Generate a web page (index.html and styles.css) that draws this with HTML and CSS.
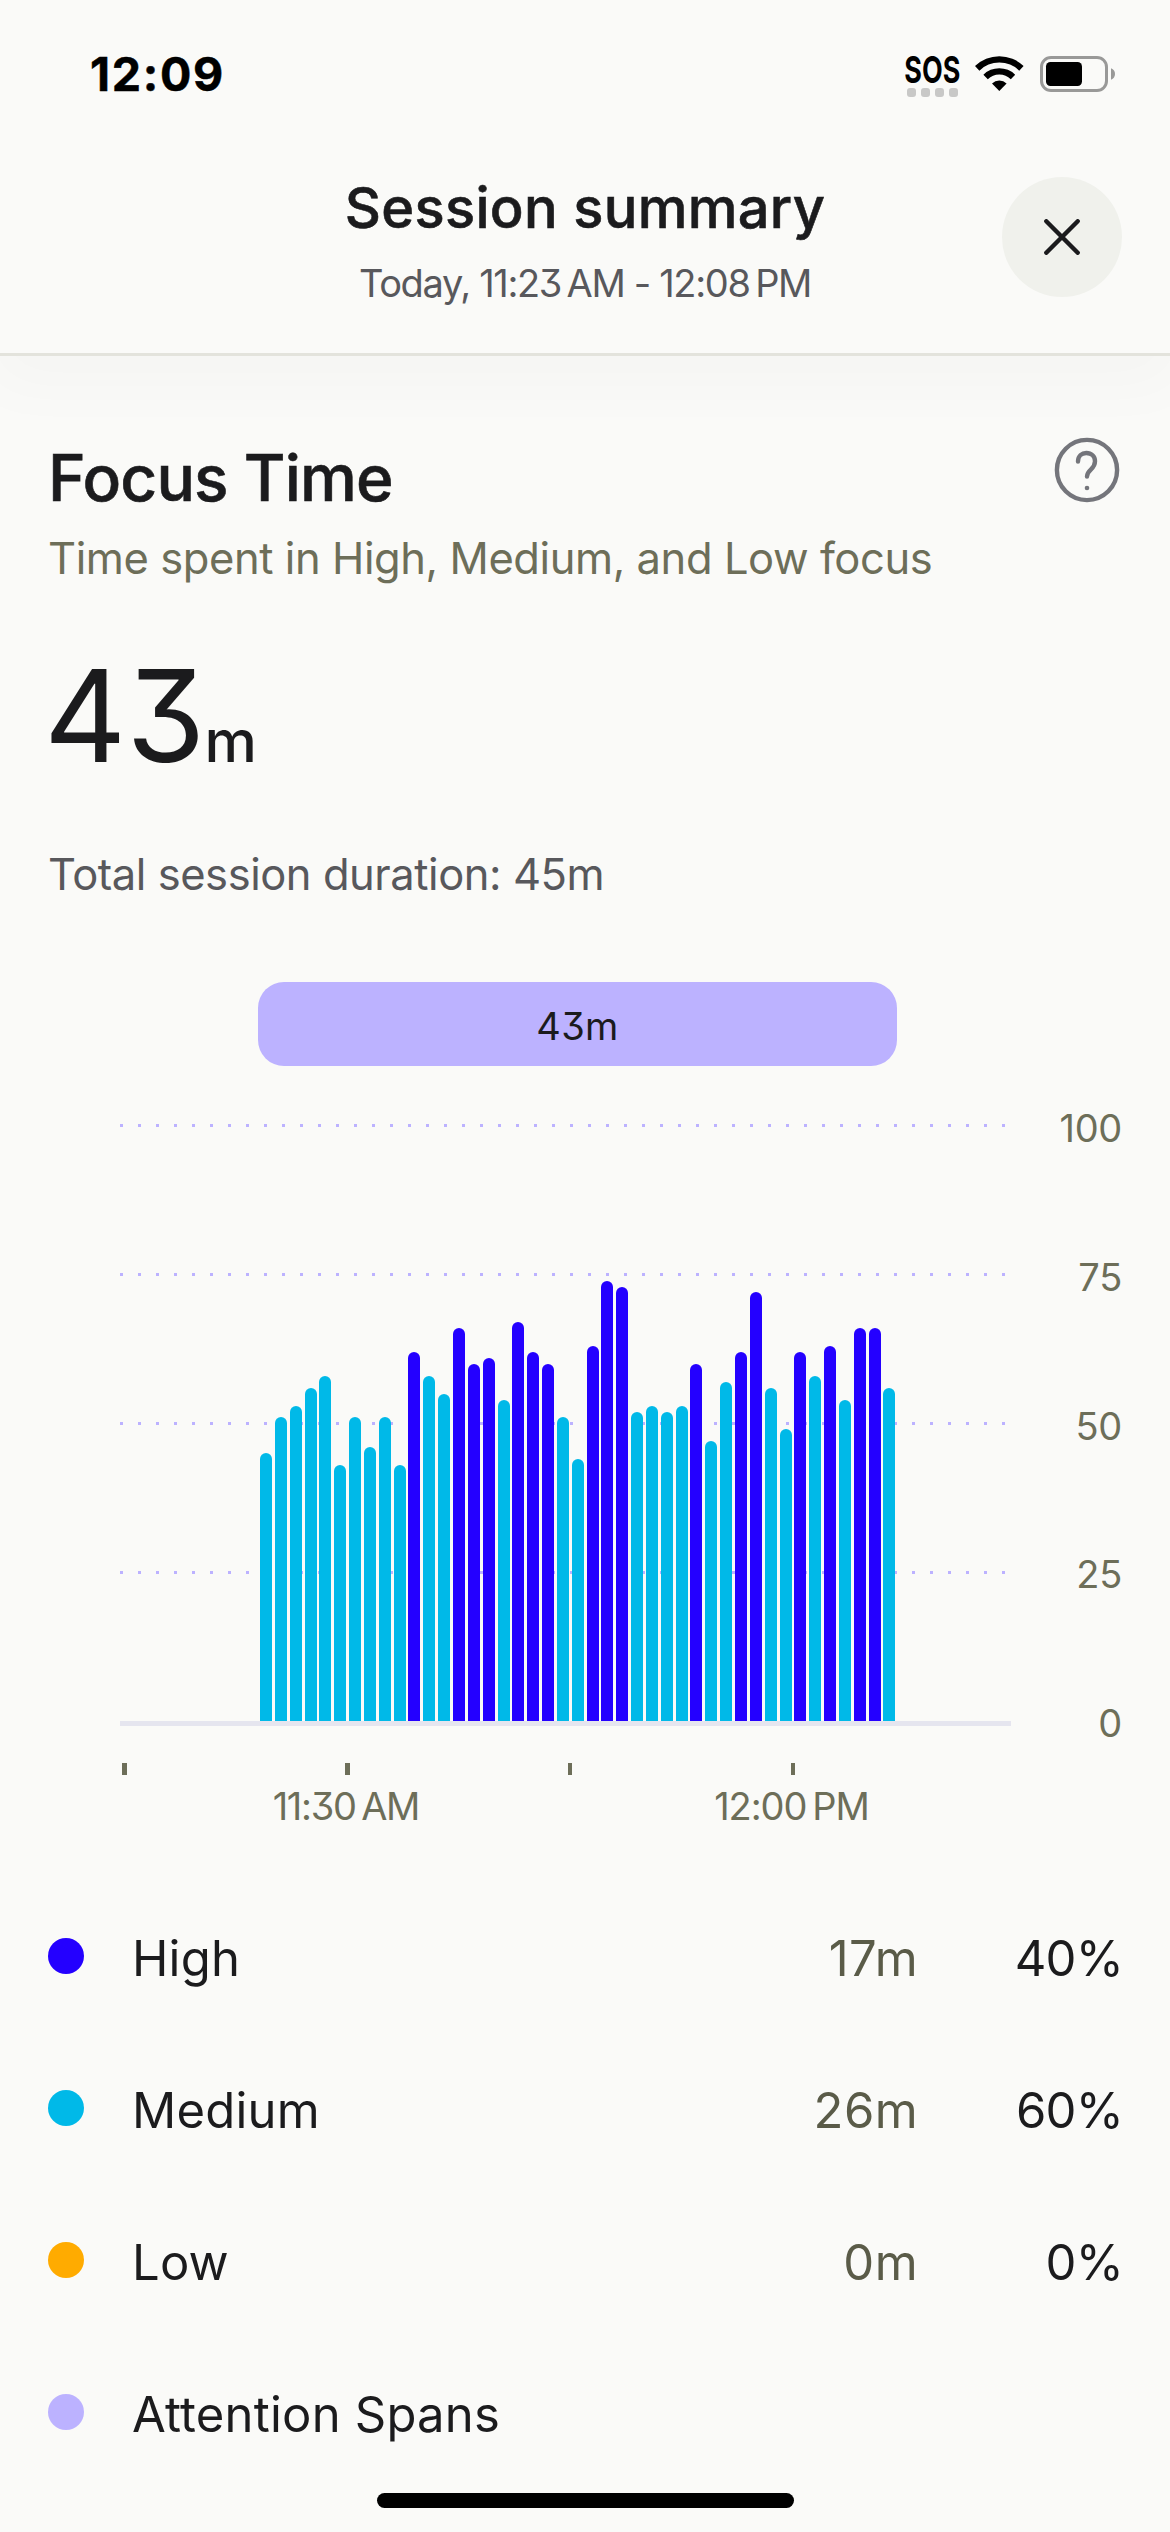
FILE: index.html
```html
<!DOCTYPE html>
<html lang="en">
<head>
<meta charset="utf-8">
<title>Session summary</title>
<link rel="stylesheet" href="styles.css">
</head>
<body>
<header class="top">
  <div class="status">
    <span class="clock">12:09</span>
    <div class="indicators">
      <svg class="sos" width="56" height="42" viewBox="0 0 56 42">
        <text x="-0.7" y="27" textLength="56" lengthAdjust="spacingAndGlyphs">SOS</text>
        <g fill="#c8c8c7"><rect x="2" y="32" width="9" height="9" rx="3"/><rect x="16" y="32" width="9" height="9" rx="3"/><rect x="30" y="32" width="9" height="9" rx="3"/><rect x="44" y="32" width="9" height="9" rx="3"/></g>
      </svg>
      <svg class="wifi" width="49" height="36" viewBox="0 0 49 36">
        <path d="M0 11.1A34.6 34.6 0 0 1 48.6 11.1L44.2 15.7A28.2 28.2 0 0 0 4.4 15.7Z"/>
        <path d="M8.4 19.7A22.6 22.6 0 0 1 40.2 19.7L35.8 24.2A16.3 16.3 0 0 0 12.8 24.2Z"/>
        <path d="M17 28.4A10.6 10.6 0 0 1 31.6 28.4L24.3 36Z"/>
      </svg>
      <svg class="battery" width="76" height="36" viewBox="0 0 76 36">
        <rect x="1.5" y="1.5" width="65" height="33" rx="9.5" fill="none" stroke="#999998" stroke-width="3"/>
        <rect x="6" y="6" width="36" height="24" rx="4.5"/>
        <path d="M71 12.3Q75 14 75 18T71 23.7Z" fill="#999998"/>
      </svg>
    </div>
  </div>
  <div class="titlebar">
    <div class="titles">
      <h1>Session summary</h1>
      <p>Today, 11:23&#8239;AM - 12:08&#8239;PM</p>
    </div>
    <button class="close" aria-label="Close">
      <svg width="36" height="36" viewBox="0 0 36 36"><path d="M2.3 2.3L33.7 33.7M33.7 2.3L2.3 33.7" fill="none" stroke="#1b1b1d" stroke-width="4.4" stroke-linecap="round"/></svg>
    </button>
  </div>
</header>

<main>
  <div class="section-head">
    <h2>Focus Time</h2>
    <svg class="help" width="66" height="66" viewBox="0 0 66 66" fill="none" stroke="#74757b" stroke-width="4.4" stroke-linecap="round">
      <circle cx="33" cy="33" r="30.1"/>
      <path d="M24 24.6C24 18.8 28 16 32.3 16C37.5 16 41 19.5 41 24.3C41 28.3 39.2 30.4 36.8 32.6C34.3 34.9 33 37 33 39.6"/>
      <circle cx="33" cy="51" r="2.3" fill="#74757b" stroke="none"/>
    </svg>
  </div>
  <p class="desc">Time spent in High, Medium, and Low focus</p>
  <p class="total"><span class="num">43</span><span class="unit">m</span></p>
  <p class="duration">Total session duration: 45m</p>

  <div class="span-pill">43m</div>

  <div class="chart">
    <div class="plot">
      <svg class="gridlines" width="891" height="622" viewBox="0 0 891 622">
        <path d="M0 21.5H891M0 170.5H891M0 319.5H891M0 468.5H891" stroke="#bcb2ff" stroke-width="3" stroke-dasharray="3 15"/>
        <rect y="617" width="891" height="5" fill="#e5e5ef"/>
      </svg>
      <div class="bars">
        <i class="med" style="height:45%"></i><i class="med" style="height:51%"></i><i class="med" style="height:53%"></i><i class="med" style="height:56%"></i><i class="med" style="height:58%"></i>
        <i class="med" style="height:43%"></i><i class="med" style="height:51%"></i><i class="med" style="height:46%"></i><i class="med" style="height:51%"></i><i class="med" style="height:43%"></i>
        <i class="high" style="height:62%"></i><i class="med" style="height:58%"></i><i class="med" style="height:55%"></i><i class="high" style="height:66%"></i><i class="high" style="height:60%"></i>
        <i class="high" style="height:61%"></i><i class="med" style="height:54%"></i><i class="high" style="height:67%"></i><i class="high" style="height:62%"></i><i class="high" style="height:60%"></i>
        <i class="med" style="height:51%"></i><i class="med" style="height:44%"></i><i class="high" style="height:63%"></i><i class="high" style="height:74%"></i><i class="high" style="height:73%"></i>
        <i class="med" style="height:52%"></i><i class="med" style="height:53%"></i><i class="med" style="height:52%"></i><i class="med" style="height:53%"></i><i class="high" style="height:60%"></i>
        <i class="med" style="height:47%"></i><i class="med" style="height:57%"></i><i class="high" style="height:62%"></i><i class="high" style="height:72%"></i><i class="med" style="height:56%"></i>
        <i class="med" style="height:49%"></i><i class="high" style="height:62%"></i><i class="med" style="height:58%"></i><i class="high" style="height:63%"></i><i class="med" style="height:54%"></i>
        <i class="high" style="height:66%"></i><i class="high" style="height:66%"></i><i class="med" style="height:56%"></i>
      </div>
    </div>
    <div class="y-axis"><span>100</span><span>75</span><span>50</span><span>25</span><span>0</span></div>
  </div>
  <div class="x-axis">
    <div></div>
    <div><span>11:30&#8239;AM</span></div>
    <div></div>
    <div><span class="pm">12:00&#8239;PM</span></div>
  </div>

  <ul class="legend">
    <li><i class="dot high"></i><span>High</span><span class="time">17m</span><span class="pct">40%</span></li>
    <li><i class="dot med"></i><span>Medium</span><span class="time">26m</span><span class="pct">60%</span></li>
    <li><i class="dot low"></i><span>Low</span><span class="time">0m</span><span class="pct">0%</span></li>
    <li><i class="dot spans"></i><span>Attention Spans</span></li>
  </ul>
</main>
<div class="home"></div>
</body>
</html>
```
FILE: styles.css
```css
* { box-sizing: border-box; margin: 0; padding: 0; }
body {
  width: 1170px;
  height: 2532px;
  overflow: hidden;
  background: #fafaf8;
  color: #1b1b1d;
  font-family: Inter, "Liberation Sans", sans-serif;
  font-feature-settings: "cv09";
}
svg { display: block; }

.top {
  height: 356px;
  background: #fafaf8;
  border-bottom: 3px solid #e3e3dc;
  box-shadow: 0 20px 60px 10px rgba(0, 0, 0, .022);
}
.status {
  height: 120px;
  padding: 0 55px 0 90px;
  display: flex;
  justify-content: space-between;
  color: #000;
}
.clock {
  margin-top: 46px;
  font-size: 46.5px;
  line-height: 56px;
  font-weight: 700;
  letter-spacing: 1.7px;
  -webkit-text-stroke: .5px #000;
}
.indicators { display: flex; align-items: flex-start; padding-top: 55px; }
.sos { margin: 1px 14px 0 0; overflow: visible; }
.sos text { font-size: 37.5px; font-weight: 700; }
.wifi { margin-right: 16px; }
.battery { margin-top: 1px; margin-right: -1px; }

.titlebar {
  display: grid;
  grid-template-columns: 1fr auto 1fr;
  align-items: start;
  padding: 54px 48px 0;
}
.titles { grid-column: 2; text-align: center; }
h1 {
  font-size: 56px;
  line-height: 68px;
  font-weight: 500;
  letter-spacing: .3px;
  -webkit-text-stroke: .6px #1b1b1d;
}
.titles p {
  margin-top: 18px;
  font-size: 38px;
  line-height: 46px;
  letter-spacing: -1.35px;
  color: #58585c;
}
.close {
  justify-self: end;
  margin-top: 3px;
  width: 120px;
  height: 120px;
  border: 0;
  border-radius: 50%;
  background: #f0f1ec;
  display: grid;
  place-items: center;
}

main { padding: 84px 48px 0; }
.section-head { display: flex; justify-content: space-between; align-items: flex-start; height: 76px; }
h2 {
  font-size: 64px;
  line-height: 76px;
  font-weight: 500;
  letter-spacing: -.86px;
  -webkit-text-stroke: .6px #1b1b1d;
}
.help { margin: -3px 2px 0 0; }
.desc, .duration { font-size: 43.5px; line-height: 54px; }
.desc { margin-top: 15px; color: #6d6e59; letter-spacing: -.42px; }
.total { margin-top: 66px; height: 130px; display: flex; align-items: baseline; line-height: 130px; }
.num { font-size: 127.5px; margin-left: -4px; }
.unit { font-size: 59px; font-weight: 500; margin-left: -1px; }
.duration { margin-top: 66px; color: #58585c; letter-spacing: -.45px; }

.span-pill {
  margin: 81px 0 0 210px;
  width: 639px;
  height: 84px;
  padding-top: 5px;
  border-radius: 26px;
  background: #bcb2ff;
  font-size: 38px;
  line-height: 79px;
  letter-spacing: .3px;
  text-align: center;
}

.chart { display: flex; justify-content: space-between; margin: 38px 0 0 72px; }
.plot { display: grid; width: 891px; height: 622px; }
.gridlines, .bars { grid-area: 1 / 1; }
.bars {
  align-self: end;
  display: flex;
  align-items: flex-end;
  gap: 2.855px;
  height: 595.2px;
  margin: 0 0 5px 140px;
}
.bars i { width: 12px; border-radius: 6px 6px 0 0; }
.high { background: #2400ff; }
.med { background: #00b9e8; }
.low { background: #ffab00; }
.spans { background: #bcb2ff; }

.y-axis {
  display: flex;
  flex-direction: column;
  justify-content: space-between;
  height: 635px;
  margin: 4px 0 -17px 0;
  text-align: right;
  font-size: 38px;
  line-height: 40px;
  letter-spacing: -.3px;
  color: #6d6e59;
}

.x-axis {
  display: grid;
  grid-template-columns: repeat(4, 222.8px);
  height: 66px;
  margin: 37px 0 0 -34.8px;
  color: #6d6e59;
  font-size: 38px;
  line-height: 46px;
  letter-spacing: -1.3px;
}
.x-axis div { display: flex; flex-direction: column; align-items: center; gap: 8px; }
.x-axis div::before { content: ""; width: 4.6px; height: 12px; background: #6d6e59; }
.x-axis span { margin-left: -3px; }
.x-axis .pm { letter-spacing: -1.05px; }

.legend { list-style: none; margin-top: 51px; }
.legend li {
  display: grid;
  grid-template-columns: 84px 1fr 200px 205px;
  align-items: center;
  height: 152px;
  font-size: 49px;
  line-height: 60px;
  letter-spacing: .2px;
}
.legend span { padding-top: 6px; }
.dot { width: 36px; height: 36px; border-radius: 50%; }
.time, .pct { text-align: right; }
.time { color: #5a5b48; letter-spacing: .4px; margin-right: -1px; }
.pct { letter-spacing: -.8px; margin-right: -1px; }

.home { width: 417px; height: 15px; margin: 5px auto 0; border-radius: 8px; background: #000; }
```
